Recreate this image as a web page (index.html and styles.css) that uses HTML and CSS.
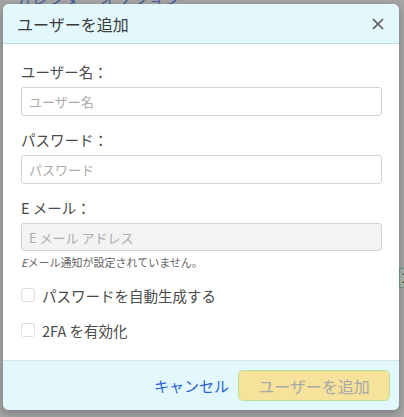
FILE: index.html
```html
<!DOCTYPE html>
<html lang="ja">
<head>
<meta charset="utf-8">
<link rel="stylesheet" href="styles.css">
</head>
<body>
<div class="backdrop-text">カレンダー オプション</div>
<div class="backdrop-box">2</div>
<div class="modal">
  <div class="modal-header">
    <span class="modal-title">ユーザーを追加</span>
    <svg class="close" width="14" height="14" viewBox="0 0 14 14"><path d="M2 2L12 12M12 2L2 12" stroke="#555" stroke-width="1.6" fill="none"/></svg>
  </div>
  <div class="modal-body">
    <div class="field">
      <label class="label">ユーザー名：</label>
      <div class="input"><span class="ph">ユーザー名</span></div>
    </div>
    <div class="field">
      <label class="label">パスワード：</label>
      <div class="input"><span class="ph">パスワード</span></div>
    </div>
    <div class="field last">
      <label class="label">E メール：</label>
      <div class="input disabled"><span class="ph">E メール アドレス</span></div>
      <div class="help"><i>E</i>メール通知が設定されていません。</div>
    </div>
    <div class="check-row first"><span class="box"></span><span>パスワードを自動生成する</span></div>
    <div class="check-row"><span class="box"></span><span>2FA を有効化</span></div>
  </div>
  <div class="modal-footer">
    <span class="cancel">キャンセル</span>
    <span class="btn">ユーザーを追加</span>
  </div>
</div>
</body>
</html>
```
FILE: styles.css
```css
html, body { margin: 0; padding: 0; }
body {
  width: 404px; height: 417px; overflow: hidden;
  background: #a4a4a4;
  font-family: "Noto Sans CJK JP", "Noto Sans", sans-serif;
  position: relative;
}
.backdrop-text {
  position: absolute; left: 16px; top: -12px;
  font-size: 15px; color: #3d5b9e; letter-spacing: 1px;
}
.backdrop-box {
  position: absolute; left: 399px; top: 268px; width: 20px; height: 18px;
  border: 1px solid #6f9a86; background: #a9b3ad; color: #2f4a3a; font-size: 13px; line-height: 18px; padding-left: 2px;
}
.modal {
  position: relative;
  margin: 4px 0 0 3px;
  width: 396px; height: 406px;
  background: #fff;
  border-radius: 6px;
  box-shadow: 0 3px 8px rgba(0,0,0,0.25);
  display: flex; flex-direction: column;
  overflow: hidden;
}
.modal-header {
  height: 39px;
  background: #e3f8fd;
  border-bottom: 1px solid #b3dfe0;
  display: flex; align-items: center; justify-content: space-between;
  padding: 0 14px 0 14px;
}
.modal-title { font-size: 16px; color: #3a3a3a; }
.close { margin-top: 1px; }
.modal-body {
  flex: 1;
  padding: 18px 17px 0 18px;
}
.field { margin-bottom: 14px; }
.field.last { margin-bottom: 0; }
.label { display: block; font-size: 14.5px; line-height: 20px; color: #4a4a4a; margin-bottom: 5px; }
.input {
  height: 27px; border: 1px solid #d3d3d3; border-radius: 3px;
  display: flex; align-items: center; padding: 0 7px;
  background: #fff;
}
.input.disabled { background: #f3f3f3; height: 26px; }
.ph { font-size: 13px; color: #aaa; }
.help { font-size: 11px; color: #666; line-height: 16px; margin-top: 3px; }
.check-row {
  display: flex; align-items: center; gap: 7px;
  height: 20px; margin-top: 15px;
  font-size: 14.5px; color: #4a4a4a;
}
.check-row.first { margin-top: 15px; }
.box {
  width: 12px; height: 12px; border: 1px solid #ddd; border-radius: 3px; background: #fff;
}
.modal-footer {
  height: 49px;
  background: #e3f8fd;
  border-top: 1px solid #d5e3ea;
  display: flex; align-items: center; justify-content: flex-end;
  padding-right: 9px; gap: 9px;
}
.cancel { font-size: 15px; color: #2a60d6; }
.btn {
  width: 150px; height: 29px;
  background: #f6e29b; border: 1px solid #b6e39a; border-radius: 5px;
  display: flex; align-items: center; justify-content: center;
  font-size: 16px; color: #a8a8a8;
}
```
